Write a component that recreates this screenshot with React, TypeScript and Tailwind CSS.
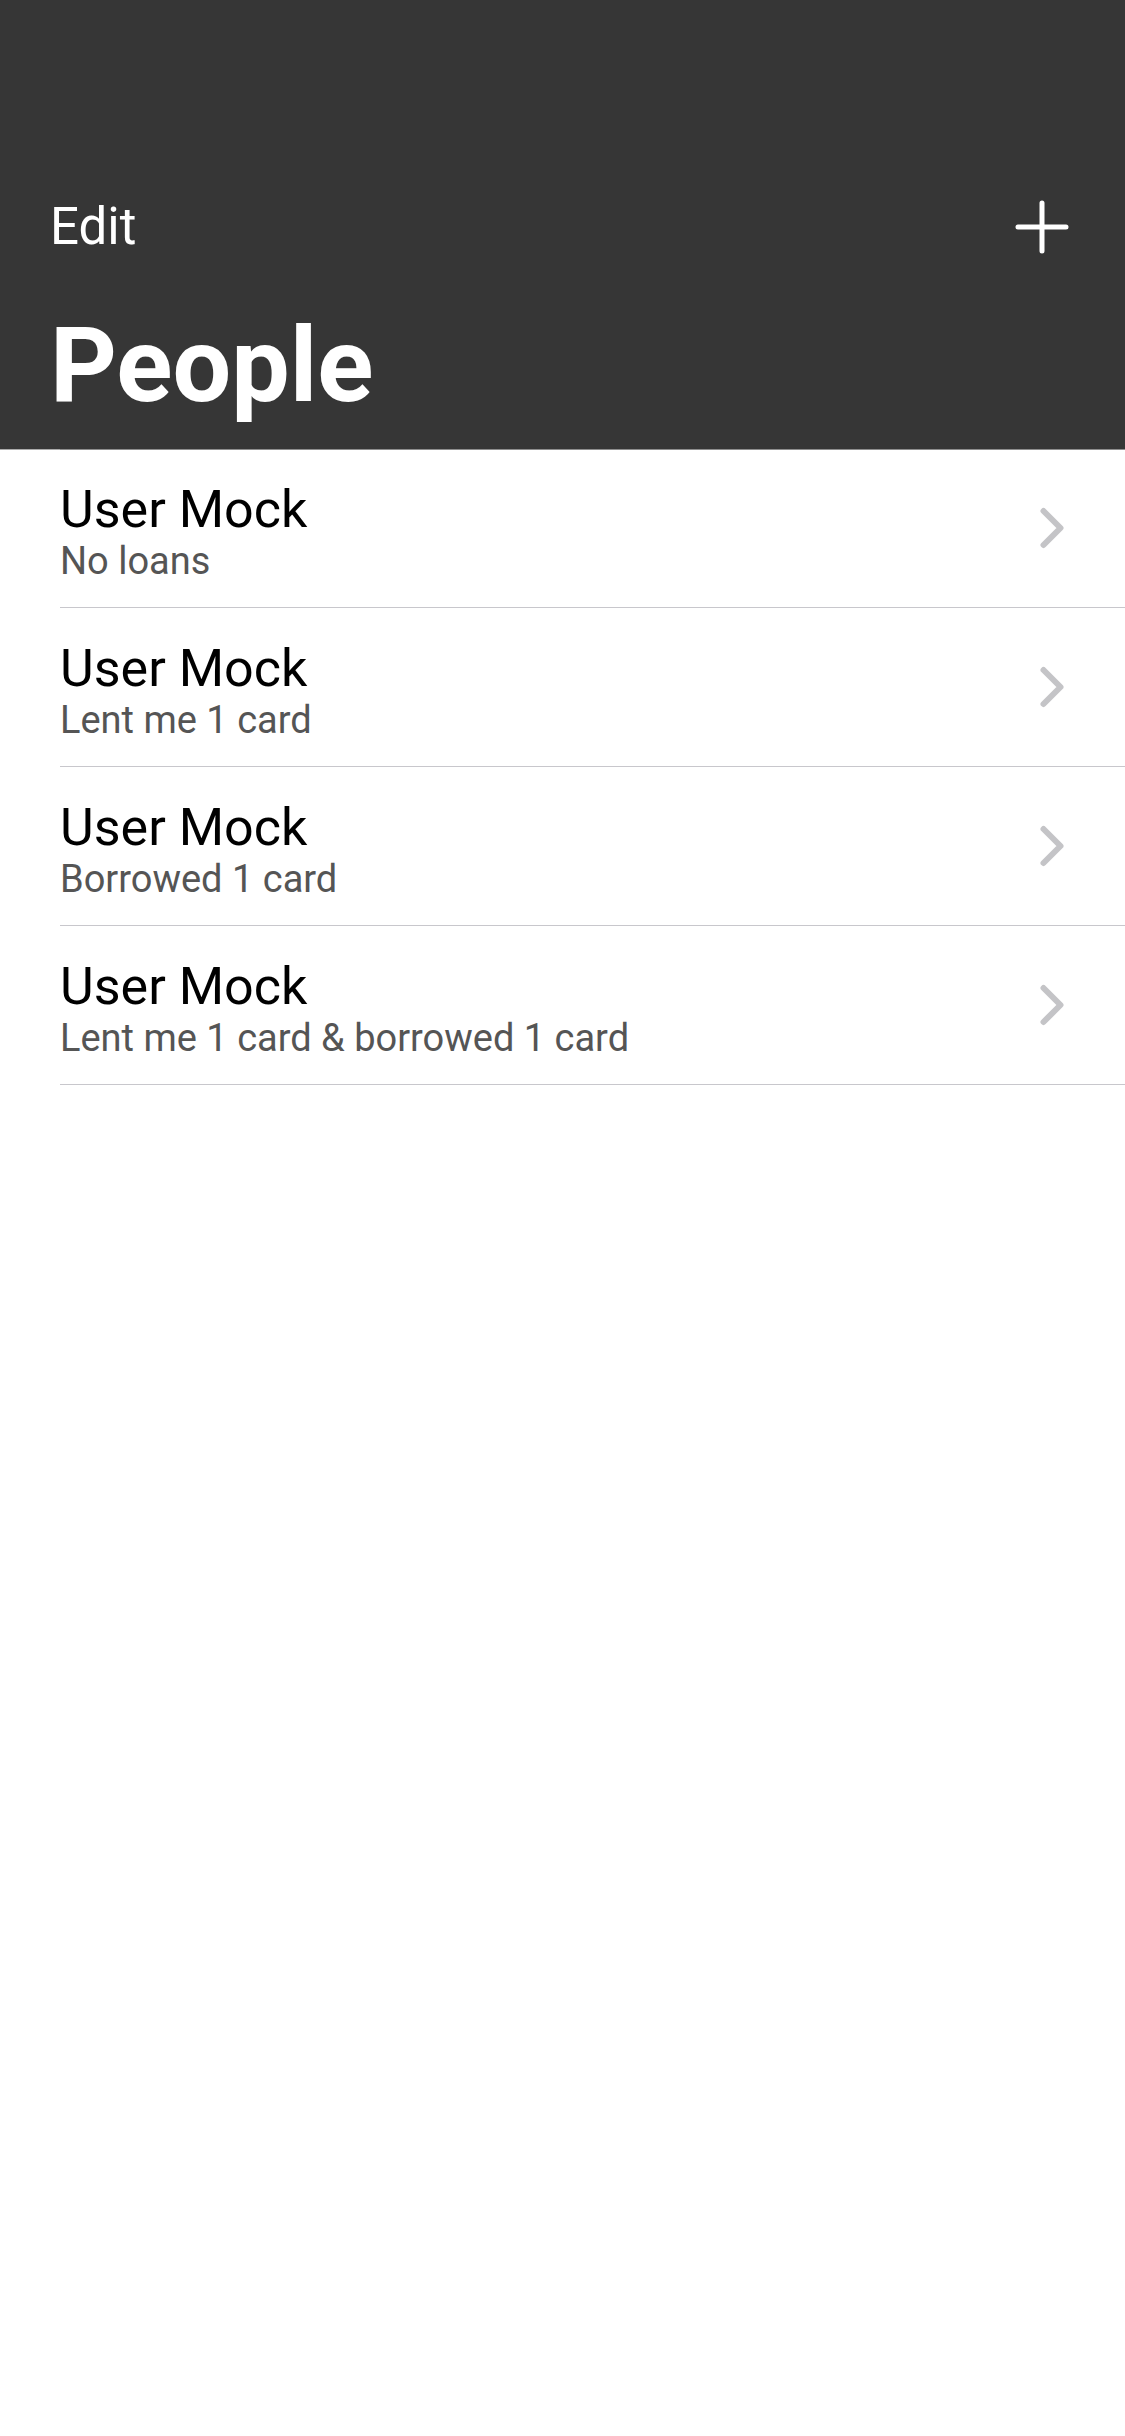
import { ChevronRight } from "lucide-react";

const people = [
  { name: "User Mock", loans: "No loans" },
  { name: "User Mock", loans: "Lent me 1 card" },
  { name: "User Mock", loans: "Borrowed 1 card" },
  { name: "User Mock", loans: "Lent me 1 card & borrowed 1 card" },
];

export default function App() {
  return (
    <div className="min-h-[2436px] bg-white font-['Roboto',sans-serif]">
      <header className="bg-[#363636] h-[449px] flex flex-col">
        <div className="mt-[176px] h-[102px] px-[50px] flex items-center justify-between">
          <button className="text-white text-[51px] leading-[60px]">Edit</button>
          <svg width="54" height="54" viewBox="0 0 54 54" className="mr-[6px]">
            <path d="M27 3v48M3 27h48" stroke="white" strokeWidth="5" strokeLinecap="round" />
          </svg>
        </div>
        <h1 className="mt-[28px] px-[50px] text-white font-bold text-[104px] leading-[120px]">
          People
        </h1>
      </header>
      <div className="flex h-px">
        <div className="w-[60px] bg-[#ababab]" />
        <div className="flex-1 bg-[#8e8e8e]" />
      </div>

      <ul>
        {people.map((p, i) => (
          <li key={i} className="pl-[60px]">
            <div className={"flex items-center pr-[39px] h-[158px] " + (i === 0 ? "-mt-px" : "")}>
              <div className="flex-1 pt-[4px]">
                <div className="text-black text-[52px] leading-[60px]">{p.name}</div>
                <div className="mt-[1px] text-[#555555] text-[38px] leading-[40px]">{p.loans}</div>
              </div>
              <ChevronRight size={68} strokeWidth={2.1} className="text-[#c4c4c7]" />
            </div>
            <div className="h-px bg-[#c8c7cc]" />
          </li>
        ))}
      </ul>
    </div>
  );
}
